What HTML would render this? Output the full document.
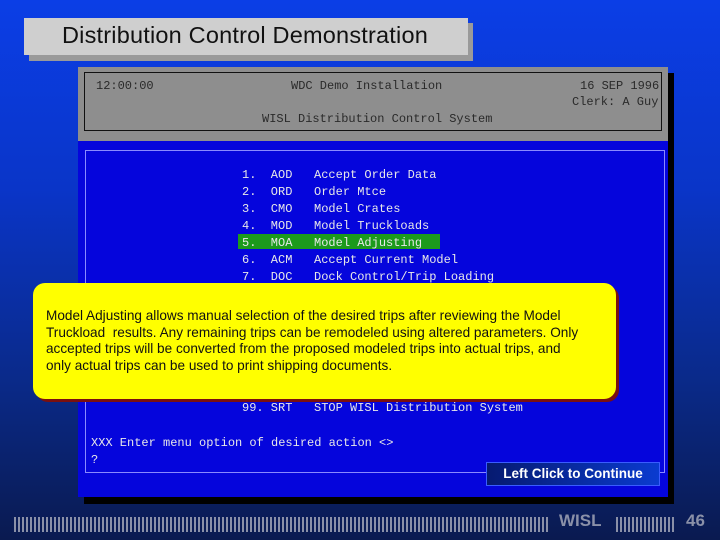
<!DOCTYPE html>
<html><head><meta charset="utf-8"><style>
*{margin:0;padding:0;box-sizing:border-box}
body{width:720px;height:540px;overflow:hidden;position:relative;font-family:"Liberation Sans",sans-serif;
background:linear-gradient(180deg,#0b3ee6 0%,#0a35c8 35%,#0a2a8a 70%,#0a1a50 100%)}
.abs{position:absolute}
.mono{font-family:"Liberation Mono",monospace;font-size:12px;white-space:pre}
</style></head><body>
<div class="abs" style="left:29px;top:23px;width:444px;height:38px;background:#9a9a9a"></div>
<div class="abs" style="left:24px;top:18px;width:444px;height:37px;background:#cfcfcf;font-size:23.5px;color:#111;padding:4px 0 0 38px;letter-spacing:0.2px">Distribution Control Demonstration</div>

<div class="abs" style="left:84px;top:73px;width:590px;height:431px;background:#000"></div>
<div class="abs" style="left:78px;top:67px;width:590px;height:74px;background:#8e8e8e"></div>
<div class="abs" style="left:84px;top:72px;width:578px;height:59px;border:1px solid #111"></div>
<div class="abs mono" style="left:96px;top:79px;color:#2a2a2a">12:00:00</div>
<div class="abs mono" style="left:291px;top:79px;color:#2a2a2a">WDC Demo Installation</div>
<div class="abs mono" style="left:580px;top:79px;color:#2a2a2a">16 SEP 1996</div>
<div class="abs mono" style="left:572px;top:95px;color:#2a2a2a">Clerk: A Guy</div>
<div class="abs mono" style="left:262px;top:112px;color:#2a2a2a">WISL Distribution Control System</div>

<div class="abs" style="left:78px;top:141px;width:590px;height:356px;background:#0505dc"></div>
<div class="abs" style="left:85px;top:150px;width:580px;height:323px;border:1px solid #8a8aff"></div>
<div class="abs" style="left:238px;top:234px;width:202px;height:15px;background:#1c9a1c"></div>
<div class="abs mono" style="left:242px;top:167px;color:#e8e8e8;line-height:17px">1.  AOD   Accept Order Data
2.  ORD   Order Mtce
3.  CMO   Model Crates
4.  MOD   Model Truckloads
5.  MOA   Model Adjusting
6.  ACM   Accept Current Model
7.  DOC   Dock Control/Trip Loading</div>
<div class="abs mono" style="left:242px;top:401px;color:#e8e8e8">99. SRT   STOP WISL Distribution System</div>
<div class="abs mono" style="left:91px;top:435px;color:#e8e8e8;line-height:17px">XXX Enter menu option of desired action &lt;&gt;
?</div>

<div class="abs" style="left:36px;top:286px;width:583px;height:116px;background:#7a1010;border-radius:12px"></div>
<div class="abs" style="left:33px;top:283px;width:583px;height:116px;background:#ffff00;border-radius:12px;font-size:13.6px;color:#111;padding:25px 0 0 13px;line-height:16.6px;white-space:nowrap">Model Adjusting allows manual selection of the desired trips after reviewing the Model<br>Truckload&nbsp; results. Any remaining trips can be remodeled using altered parameters. Only<br>accepted trips will be converted from the proposed modeled trips into actual trips, and<br>only actual trips can be used to print shipping documents.</div>

<div class="abs" style="left:486px;top:462px;width:174px;height:24px;background:linear-gradient(90deg,#061a70,#0a3bd0);border:1px solid #3a5cff;color:#fff;font-weight:bold;font-size:13.5px;text-align:center;line-height:22px">Left Click to Continue</div>

<div class="abs" style="left:14px;top:517px;width:535px;height:15px;background:repeating-linear-gradient(90deg,#8a90a8 0 2px,transparent 2px 4px)"></div>
<div class="abs" style="left:559px;top:511px;color:#8a90a8;font-weight:bold;font-size:17px">WISL</div>
<div class="abs" style="left:616px;top:517px;width:58px;height:15px;background:repeating-linear-gradient(90deg,#8a90a8 0 2px,transparent 2px 4px)"></div>
<div class="abs" style="left:686px;top:511px;color:#8a90a8;font-weight:bold;font-size:17px">46</div>
</body></html>
